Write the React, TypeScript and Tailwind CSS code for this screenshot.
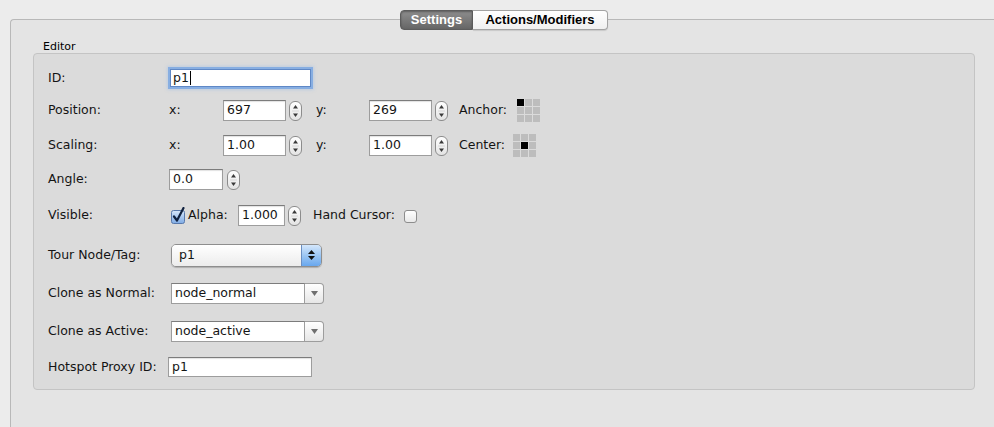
import React from 'react';

function Stepper({ className = '' }: { className?: string }) {
  return (
    <svg width="13" height="20" viewBox="0 0 13 20" className={`shrink-0 ${className}`}>
      <defs>
        <linearGradient id="stepG" x1="0" y1="0" x2="0" y2="1">
          <stop offset="0" stopColor="#ffffff" />
          <stop offset="0.5" stopColor="#f1f1f1" />
          <stop offset="1" stopColor="#e2e2e2" />
        </linearGradient>
      </defs>
      <rect x="0.5" y="0.5" width="12" height="19" rx="5.5" fill="url(#stepG)" stroke="#8c8c8c" />
      <line x1="3" y1="10" x2="10" y2="10" stroke="#d6d6d6" />
      <path d="M6.5 4 L9 7.5 L4 7.5 Z" fill="#3a3a3a" />
      <path d="M6.5 16 L9 12.5 L4 12.5 Z" fill="#3a3a3a" />
    </svg>
  );
}

function Field({ value, className = '' }: { value: string; className?: string }) {
  return (
    <div
      className={`flex items-center bg-white border border-[#9d9d9d] border-t-[#7c7c7c] shadow-[inset_0_1px_1px_rgba(0,0,0,0.12)] pl-[3px] leading-none shrink-0 ${className}`}
    >
      {value}
    </div>
  );
}

function PointGrid({ active }: { active: number }) {
  return (
    <div className="grid grid-cols-3 gap-[1px] w-[23px] shrink-0">
      {Array.from({ length: 9 }).map((_, i) => (
        <div key={i} className={`w-[7px] h-[7px] ${i === active ? 'bg-black' : 'bg-[#bdbdbd]'}`} />
      ))}
    </div>
  );
}

function Label({ children }: { children: React.ReactNode }) {
  return <span className="w-[121px] shrink-0">{children}</span>;
}

function Combo({ value }: { value: string }) {
  return (
    <div className="ml-[2px] flex h-[21px] w-[153px] shrink-0">
      <div className="flex-1 flex items-center bg-white border border-[#9d9d9d] border-t-[#7c7c7c] pl-[3px]">
        {value}
      </div>
      <div className="w-[19px] flex items-center justify-center rounded-r-[4px] border border-l-0 border-[#9d9d9d] bg-gradient-to-b from-white to-[#e6e6e6]">
        <svg width="7" height="5" viewBox="0 0 7 5">
          <path d="M0 0 L7 0 L3.5 5 Z" fill="#6f6f6f" />
        </svg>
      </div>
    </div>
  );
}

export default function App() {
  return (
    <div className="w-[994px] h-[427px] overflow-hidden bg-[#ececec] font-['DejaVu_Sans',sans-serif] text-[12.5px] text-[#141414]">
      <div className="pl-[10px] pt-[10px] w-[998px]">
        {/* Tabs */}
        <div className="relative z-10 flex justify-center h-[20px] -mb-[11px] font-['Liberation_Sans',sans-serif] font-bold text-[13px]">
          <div className="w-[73px] h-[20px] flex items-center justify-center rounded-l-[4px] border border-[#5c5c5c] bg-gradient-to-b from-[#8e8e8e] to-[#666666] text-white shadow-[inset_0_1px_2px_rgba(0,0,0,0.35)]">
            Settings
          </div>
          <div className="w-[135px] h-[20px] flex items-center justify-center rounded-r-[4px] border border-l-0 border-[#a3a3a3] bg-gradient-to-b from-white to-[#f0f0f0] text-black shadow-[0_1px_1px_rgba(0,0,0,0.12)]">
            Actions/Modifiers
          </div>
        </div>

        {/* Tab body */}
        <div className="w-[988px] h-[420px] border-t border-l border-[#b8b8b8] rounded-tl-[4px] bg-[#e4e4e4] px-[22px] pt-[20px]">
          <div className="ml-[10px] h-[13px] text-[11px] leading-[13px] text-black">Editor</div>

          <div className="w-[942px] h-[337px] rounded-[4px] border border-[#c4c4c4] bg-[#dbdbdb] pl-[14px]">
            {/* ID */}
            <div className="mt-[13px] h-[22px] flex items-center">
              <Label>ID:</Label>
              <div className="ml-[1px] w-[141px] h-[18px] flex items-center bg-white border border-[#5f88c6] shadow-[0_0_0_2px_rgba(125,168,226,0.85),0_0_3px_3px_rgba(140,180,235,0.35)] pl-[2px]">
                p1
                <span className="ml-[1px] w-[1px] h-[14px] bg-black" />
              </div>
            </div>

            {/* Position */}
            <div className="mt-[11px] h-[21px] flex items-center">
              <Label>Position:</Label>
              <span className="w-[54px] shrink-0">x:</span>
              <Field value="697" className="w-[63px] h-[21px]" />
              <Stepper className="ml-[3px]" />
              <span className="ml-[14px] w-[53px] shrink-0">y:</span>
              <Field value="269" className="w-[63px] h-[21px]" />
              <Stepper className="ml-[3px]" />
              <span className="ml-[11px] w-[58px] shrink-0">Anchor:</span>
              <PointGrid active={0} />
            </div>

            {/* Scaling */}
            <div className="mt-[14px] h-[21px] flex items-center">
              <Label>Scaling:</Label>
              <span className="w-[54px] shrink-0">x:</span>
              <Field value="1.00" className="w-[63px] h-[21px]" />
              <Stepper className="ml-[3px]" />
              <span className="ml-[14px] w-[53px] shrink-0">y:</span>
              <Field value="1.00" className="w-[63px] h-[21px]" />
              <Stepper className="ml-[3px]" />
              <span className="ml-[11px] w-[54px] shrink-0">Center:</span>
              <PointGrid active={4} />
            </div>

            {/* Angle */}
            <div className="mt-[13px] h-[21px] flex items-center">
              <Label>Angle:</Label>
              <Field value="0.0" className="w-[54px] h-[21px]" />
              <Stepper className="ml-[4px]" />
            </div>

            {/* Visible */}
            <div className="mt-[15px] h-[21px] flex items-center">
              <Label>Visible:</Label>
              <svg width="16" height="17" viewBox="0 0 16 17" className="ml-[1px] shrink-0">
                <defs>
                  <linearGradient id="chkG" x1="0" y1="0" x2="0" y2="1">
                    <stop offset="0" stopColor="#d8e8fb" />
                    <stop offset="0.5" stopColor="#a9c8f0" />
                    <stop offset="1" stopColor="#7fabe4" />
                  </linearGradient>
                </defs>
                <rect x="1.5" y="3.5" width="13" height="13" rx="2" fill="url(#chkG)" stroke="#5979ab" />
                <path d="M4 9.5 L7 13.5 L13.5 1" fill="none" stroke="#10213f" strokeWidth="2.2" strokeLinecap="round" strokeLinejoin="round" />
              </svg>
              <span className="ml-[2px] w-[50px] shrink-0">Alpha:</span>
              <Field value="1.000" className="w-[47px] h-[21px]" />
              <Stepper className="ml-[3px]" />
              <span className="ml-[12px] w-[91px] shrink-0">Hand Cursor:</span>
              <div className="w-[13px] h-[13px] mt-[2px] rounded-[3px] border border-[#8d8d8d] bg-gradient-to-b from-white to-[#e9e9e9] shrink-0" />
            </div>

            {/* Tour Node/Tag */}
            <div className="mt-[17px] h-[24px] flex items-center">
              <Label>Tour Node/Tag:</Label>
              <div className="ml-[2px] flex w-[151px] h-[23px] rounded-[5px] border border-[#8e8e8e] overflow-hidden shadow-[0_1px_1px_rgba(0,0,0,0.2)] shrink-0">
                <div className="flex-1 flex items-center pl-[7px] bg-gradient-to-b from-white to-[#ececec]">p1</div>
                <div className="w-[20px] flex flex-col items-center justify-center gap-[2px] border-l border-[#6b8fc2] bg-gradient-to-b from-[#d4e7fc] via-[#9cc6f3] to-[#68a7ee]">
                  <svg width="7" height="4" viewBox="0 0 7 4">
                    <path d="M3.5 0 L7 4 L0 4 Z" fill="#111" />
                  </svg>
                  <svg width="7" height="4" viewBox="0 0 7 4">
                    <path d="M0 0 L7 0 L3.5 4 Z" fill="#111" />
                  </svg>
                </div>
              </div>
            </div>

            {/* Clone as Normal */}
            <div className="mt-[16px] h-[21px] flex items-center">
              <Label>Clone as Normal:</Label>
              <Combo value="node_normal" />
            </div>

            {/* Clone as Active */}
            <div className="mt-[17px] h-[21px] flex items-center">
              <Label>Clone as Active:</Label>
              <Combo value="node_active" />
            </div>

            {/* Hotspot Proxy ID */}
            <div className="mt-[15px] h-[20px] flex items-center">
              <Label>Hotspot Proxy ID:</Label>
              <Field value="p1" className="-ml-[1px] w-[144px] h-[20px]" />
            </div>
          </div>
        </div>
      </div>
    </div>
  );
}
